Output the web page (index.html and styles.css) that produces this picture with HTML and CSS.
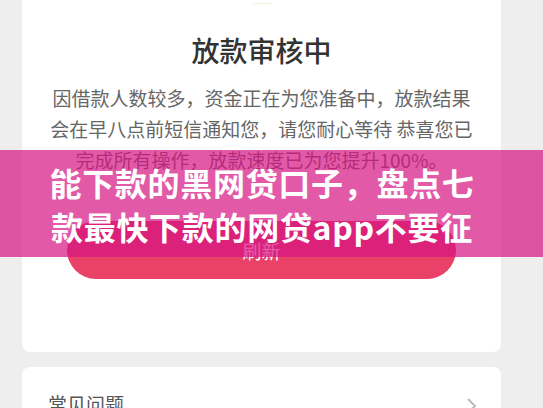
FILE: index.html
```html
<!DOCTYPE html>
<html lang="zh-CN">
<head>
<meta charset="utf-8">
<title>放款审核中</title>
<link rel="stylesheet" href="styles.css">
</head>
<body>
<div class="page">
  <section class="card status">
    <div class="icon">
      <svg width="40" height="4" viewBox="0 0 40 4"><ellipse cx="20" cy="-14" rx="18" ry="17" fill="#f4f3d6"/></svg>
    </div>
    <h1 class="title">放款审核中</h1>
    <p class="desc">因借款人数较多，资金正在为您准备中，放款结果会在早八点前短信通知您，请您耐心等待 恭喜您已完成所有操作，放款速度已为您提升100%。</p>
    <button class="btn">刷新</button>
  </section>
  <section class="card faq">
    <span class="faq-label">常见问题</span>
    <svg class="chev" width="12" height="18" viewBox="0 0 12 18"><path d="M2 2 L9 9 L2 16" fill="none" stroke="#bbb" stroke-width="2"/></svg>
  </section>
</div>
<div class="banner">
  <div class="banner-text">能下款的黑网贷口子，盘点七<br>款最快下款的网贷app不要征</div>
</div>
</body>
</html>
```

FILE: styles.css
```css
html, body {
  margin: 0;
  padding: 0;
  background: #eeeeee;
  font-family: "Noto Sans CJK SC", "Noto Sans", sans-serif;
  height: 408px;
  overflow: hidden;
}
.page {
  padding: 0 42px 0 22px;
}
.card {
  background: #ffffff;
  border-radius: 8px;
}
.status {
  border-radius: 0 0 8px 8px;
  padding: 0 27px 73px;
  display: flex;
  flex-direction: column;
  align-items: center;
}
.icon {
  height: 4px;
  overflow: hidden;
  line-height: 0;
}
.title {
  margin: 28px 0 0;
  font-size: 28px;
  line-height: 36px;
  font-weight: 500;
  color: #333333;
}
.desc {
  margin: 14px 0 0;
  font-size: 19px;
  line-height: 31px;
  color: #666666;
  text-align: center;
  width: 425px;
}
.btn {
  margin-top: 46px;
  width: 389px;
  height: 58px;
  border: none;
  border-radius: 29px;
  background: #ea4169;
  color: #ffffff;
  font-family: inherit;
  font-size: 19px;
}
.faq {
  margin-top: 15px;
  padding: 24px 23px 0 26px;
  height: 60px;
  display: flex;
  justify-content: space-between;
  align-items: flex-start;
}
.faq-label {
  font-size: 19px;
  line-height: 26px;
  color: #555555;
}
.chev {
  margin-top: 6px;
}
.banner {
  position: absolute;
  left: 0;
  top: 150px;
  width: 543px;
  height: 107px;
  box-sizing: border-box;
  padding-right: 19px;
  background: rgba(214, 20, 130, 0.7);
  display: flex;
  justify-content: center;
  align-items: center;
}
.banner-text {
  color: #ffffff;
  font-size: 32px;
  font-weight: 700;
  line-height: 44px;
  letter-spacing: 0.7px;
  text-align: center;
  white-space: nowrap;
}
```
